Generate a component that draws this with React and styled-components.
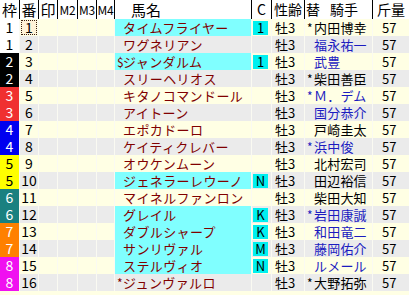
import React from "react";
import styled, { createGlobalStyle } from "styled-components";

const COLS = "20px 19px 19px 20px 19px 18px 137px 20px 33px 68px 36px";

const Global = createGlobalStyle`
  html, body { margin: 0; padding: 0; background: #FFFFE4; }
  body { font-family: "Noto Sans CJK JP", "Noto Sans", sans-serif; }
`;

const Table = styled.div`
  width: 409px;
  height: 295px;
  background: #FFFFE4;
  overflow: hidden;
`;

const HeadRow = styled.div`
  display: grid;
  grid-template-columns: ${COLS};
  height: 19px;
  background: #fff;
`;

const HeadCell = styled.div`
  box-sizing: border-box;
  border-right: 1px solid #000;
  font-size: ${(p) => p.$fs || 15}px;
  letter-spacing: ${(p) => p.$ls || 0}px;
  line-height: 19px;
  height: 19px;
  display: flex;
  align-items: center;
  justify-content: ${(p) => p.$align || "center"};
  padding-left: ${(p) => p.$pl || 0}px;
  color: #000;
  white-space: nowrap;
  gap: ${(p) => p.$gap || 0}px;
  &:last-child { border-right: none; }
`;

const Row = styled.div`
  display: grid;
  grid-template-columns: ${COLS};
  height: 17px;
  background: ${(p) => (p.$alt ? "#EBEBEB" : "#FFFFE4")};
  font-size: 13px;
  line-height: 17px;
`;

const Cell = styled.div`
  box-sizing: border-box;
  border-right: 1px solid #FAFAF2;
  height: 17px;
  display: flex;
  align-items: center;
  white-space: nowrap;
  &:last-child { border-right: none; }
`;

const WAKU = {
  1: ["#FFFFFF", "#000"],
  2: ["#000000", "#fff"],
  3: ["#F03030", "#fff"],
  4: ["#0000F0", "#fff"],
  5: ["#FFFF00", "#000"],
  6: ["#1A8080", "#fff"],
  7: ["#FF8000", "#fff"],
  8: ["#F010F0", "#fff"],
};

const WakuCell = styled(Cell)`
  justify-content: center;
  font-size: 14px;
  background: ${(p) => WAKU[p.$w][0]};
  color: ${(p) => WAKU[p.$w][1]};
`;

const NumCell = styled(Cell)`
  justify-content: center;
  font-size: 14px;
  color: #000;
  position: relative;
`;

const Focus = styled.span`
  position: absolute;
  inset: 1px 1px 1px 1px;
  border: 1px dotted #3a2010;
  background: #FFF3D8;
  z-index: 0;
`;

const NumText = styled.span`
  position: relative;
  z-index: 1;
`;

const NameCell = styled(Cell)`
  padding-left: 2px;
  color: #800000;
  letter-spacing: 0.4px;
  background: ${(p) => (p.$hl ? "#80FFFF" : "transparent")};
`;

const Mark = styled.span`
  display: inline-block;
  width: ${(p) => p.$w}px;
  letter-spacing: 0;
  font-size: 12px;
`;

const CCell = styled(Cell)`
  padding-left: 1px;
`;

const Badge = styled.span`
  width: 15px;
  height: 14px;
  background: #00F0F0;
  color: #000;
  font-size: 13px;
  line-height: 14px;
  text-align: center;
`;

const SexCell = styled(Cell)`
  padding-left: 3px;
  color: #000;
`;

const JockeyCell = styled(Cell)`
  padding-left: 2px;
  letter-spacing: 0.2px;
  color: ${(p) => (p.$blue ? "#1C1CC0" : "#000")};
`;

const WeightCell = styled(Cell)`
  padding-left: 9px;
  color: #000;
`;

const data = [
  [1, 1, "", "タイムフライヤー", true, "1", "*", "内田博幸", false],
  [1, 2, "", "ワグネリアン", false, "", "", "福永祐一", true],
  [2, 3, "$", "ジャンダルム", true, "1", "", "武豊", true],
  [2, 4, "", "スリーヘリオス", false, "", "*", "柴田善臣", false],
  [3, 5, "", "キタノコマンドール", false, "", "*", "Ｍ．デム", true],
  [3, 6, "", "アイトーン", false, "", "", "国分恭介", true],
  [4, 7, "", "エポカドーロ", false, "", "", "戸崎圭太", false],
  [4, 8, "", "ケイティクレバー", false, "", "*", "浜中俊", true],
  [5, 9, "", "オウケンムーン", false, "", "", "北村宏司", false],
  [5, 10, "", "ジェネラーレウーノ", true, "N", "", "田辺裕信", false],
  [6, 11, "", "マイネルファンロン", false, "", "", "柴田大知", false],
  [6, 12, "", "グレイル", true, "K", "*", "岩田康誠", true],
  [7, 13, "", "ダブルシャープ", true, "K", "", "和田竜二", true],
  [7, 14, "", "サンリヴァル", true, "M", "", "藤岡佑介", true],
  [8, 15, "", "ステルヴィオ", true, "N", "", "ルメール", true],
  [8, 16, "*", "ジュンヴァルロ", false, "", "*", "大野拓弥", false],
];

export default function App() {
  return (
    <>
      <Global />
      <Table>
        <HeadRow>
          <HeadCell>枠</HeadCell>
          <HeadCell>番</HeadCell>
          <HeadCell>印</HeadCell>
          <HeadCell $fs={12} $ls={-0.3}>M2</HeadCell>
          <HeadCell $fs={12} $ls={-0.3}>M3</HeadCell>
          <HeadCell $fs={12} $ls={-0.3}>M4</HeadCell>
          <HeadCell $align="flex-start" $pl={16}>馬名</HeadCell>
          <HeadCell $fs={14}>C</HeadCell>
          <HeadCell $fs={14}>性齢</HeadCell>
          <HeadCell $align="flex-start" $pl={1} $gap={10} $fs={14}>
            <span>替</span>
            <span>騎手</span>
          </HeadCell>
          <HeadCell $fs={14}>斤量</HeadCell>
        </HeadRow>
        {data.map(([w, n, hm, name, hl, c, jm, jockey, blue], i) => (
          <Row key={n} $alt={i % 2 === 1}>
            <WakuCell $w={w}>{w}</WakuCell>
            <NumCell>
              {n === 1 && <Focus />}
              <NumText>{n}</NumText>
            </NumCell>
            <Cell />
            <Cell />
            <Cell />
            <Cell />
            <NameCell $hl={hl}>
              <Mark $w={6}>{hm}</Mark>
              {name}
            </NameCell>
            <CCell>{c && <Badge>{c}</Badge>}</CCell>
            <SexCell>牡3</SexCell>
            <JockeyCell $blue={blue}>
              <Mark $w={7}>{jm}</Mark>
              {jockey}
            </JockeyCell>
            <WeightCell>57</WeightCell>
          </Row>
        ))}
      </Table>
    </>
  );
}
